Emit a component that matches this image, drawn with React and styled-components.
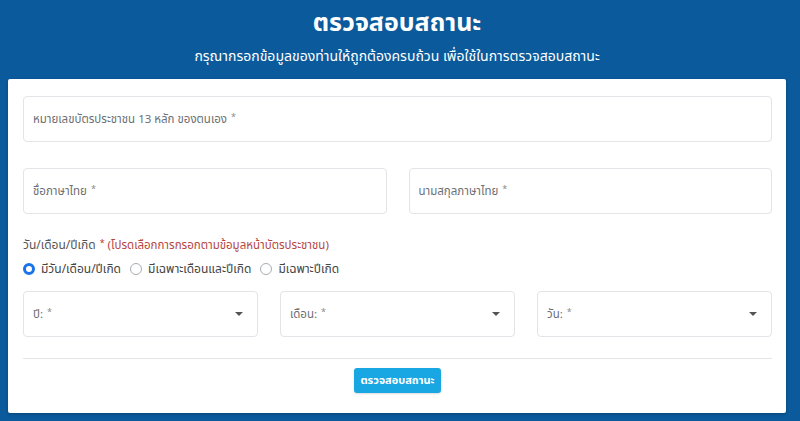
import React from 'react'
import styled, { createGlobalStyle } from 'styled-components'

const GlobalStyle = createGlobalStyle`
  html, body {
    margin: 0;
    padding: 0;
    background: #0a5a9c;
    font-family: "Noto Sans Thai", "Noto Sans Thai UI", "Noto Sans", "Liberation Sans", sans-serif;
  }
  * { box-sizing: border-box; }
`

const Page = styled.div`
  width: 800px;
  height: 421px;
  background: #0a5a9c;
  padding: 0 14px 0 8px;
  overflow: hidden;
`

const Header = styled.header`
  display: flex;
  flex-direction: column;
  align-items: center;
  color: #fff;
  padding-top: 6px;
  height: 79px;
`

const Title = styled.h1`
  margin: 0;
  font-size: 25px;
  font-weight: 700;
  line-height: 34px;
`

const Subtitle = styled.p`
  margin: 7px 0 0;
  font-size: 14px;
  line-height: 20px;
`

const Card = styled.form`
  background: #fff;
  border-radius: 2px;
  padding: 17px 14px 0 15px;
  height: 334px;
  box-shadow: 0 1px 3px rgba(0, 0, 0, 0.25);
`

const Field = styled.div`
  height: 46px;
  border: 1px solid #e2e4e7;
  border-radius: 4px;
  display: flex;
  align-items: center;
  justify-content: space-between;
  padding: 0 14px 0 9px;
  color: #6c6f73;
  font-size: 11.5px;
  background: #fff;
`

const Star = styled.span`
  color: ${({ red }) => (red ? '#c0392b' : '#8a8d91')};
  margin-left: 4px;
  font-size: 9px;
  position: relative;
  top: -3px;
`

const Row = styled.div`
  display: grid;
  grid-template-columns: repeat(${({ cols }) => cols}, 1fr);
  column-gap: 22px;
  margin-top: ${({ top }) => top}px;
`

const Caption = styled.div`
  margin-top: 23px;
  font-size: 12px;
  color: #555;
  line-height: 16px;
`

const Hint = styled.span`
  color: #b5473f;
  margin-left: 3px;
  font-size: 11.5px;
`

const Radios = styled.div`
  display: flex;
  gap: 9px;
  margin-top: 7px;
  font-size: 12px;
  color: #444;
  line-height: 16px;
`

const RadioItem = styled.label`
  display: flex;
  align-items: center;
  gap: 6px;
`

const Dot = styled.span`
  width: 12px;
  height: 12px;
  border-radius: 50%;
  border: ${({ on }) => (on ? '3.5px solid #1a73e8' : '1px solid #a9acb0')};
  background: #fff;
`

const Caret = styled.span`
  width: 0;
  height: 0;
  border-left: 4px solid transparent;
  border-right: 4px solid transparent;
  border-top: 4px solid #555;
`

const Divider = styled.hr`
  border: 0;
  border-top: 1px solid #e3e5e8;
  margin: 21px 0 0;
`

const Actions = styled.div`
  display: flex;
  justify-content: center;
  margin-top: 9px;
`

const Button = styled.button`
  background: #19a7e3;
  color: #fff;
  border: 0;
  border-radius: 3px;
  height: 25px;
  padding: 0 6px;
  font-family: inherit;
  font-size: 11px;
  font-weight: 700;
  box-shadow: 0 1px 2px rgba(0, 0, 0, 0.15);
`

const Select = ({ label }) => (
  <Field>
    <span>{label}<Star>*</Star></span>
    <Caret />
  </Field>
)

export default function App() {
  return (
    <>
      <GlobalStyle />
      <Page>
        <Header>
          <Title>ตรวจสอบสถานะ</Title>
          <Subtitle>กรุณากรอกข้อมูลของท่านให้ถูกต้องครบถ้วน เพื่อใช้ในการตรวจสอบสถานะ</Subtitle>
        </Header>
        <Card>
          <Field>
            <span>หมายเลขบัตรประชาชน 13 หลัก ของตนเอง<Star>*</Star></span>
          </Field>
          <Row cols={2} top={26}>
            <Field><span>ชื่อภาษาไทย<Star>*</Star></span></Field>
            <Field><span>นามสกุลภาษาไทย<Star>*</Star></span></Field>
          </Row>
          <Caption>
            วัน/เดือน/ปีเกิด<Star red>*</Star>
            <Hint>(โปรดเลือกการกรอกตามข้อมูลหน้าบัตรประชาชน)</Hint>
          </Caption>
          <Radios>
            <RadioItem><Dot on />มีวัน/เดือน/ปีเกิด</RadioItem>
            <RadioItem><Dot />มีเฉพาะเดือนและปีเกิด</RadioItem>
            <RadioItem><Dot />มีเฉพาะปีเกิด</RadioItem>
          </Radios>
          <Row cols={3} top={14}>
            <Select label="ปี:" />
            <Select label="เดือน:" />
            <Select label="วัน:" />
          </Row>
          <Divider />
          <Actions>
            <Button type="button">ตรวจสอบสถานะ</Button>
          </Actions>
        </Card>
      </Page>
    </>
  )
}
